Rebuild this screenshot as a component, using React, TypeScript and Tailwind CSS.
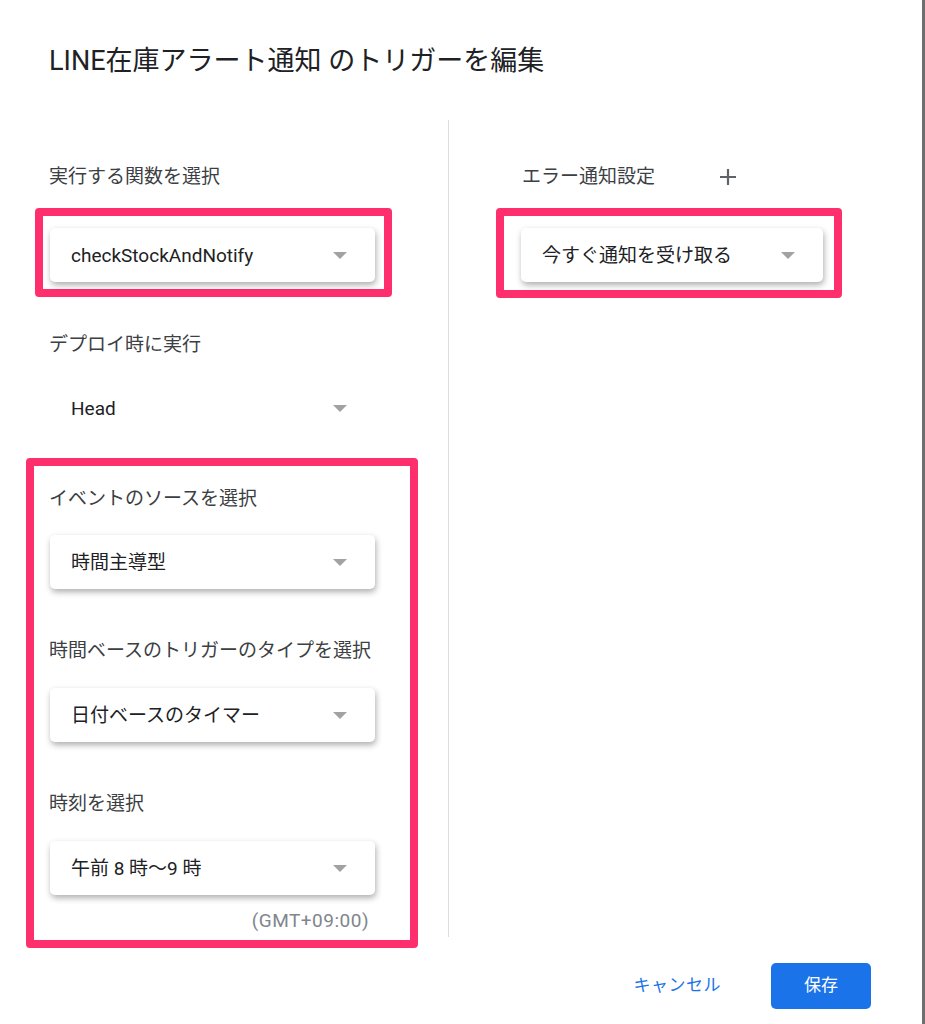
import React from "react"

const font = { fontFamily: '"Roboto", "Noto Sans CJK JP", sans-serif' }

const Arrow = () => (
    <svg width="14" height="7" viewBox="0 0 14 7" className="shrink-0">
        <path d="M0 0 L14 0 L7 7 Z" fill="#a2a2a2" />
    </svg>
)

const Select = ({ value, flat = false, width = "w-[325px]" }: { value: string; flat?: boolean; width?: string }) => (
    <div
        className={`${width} h-[54px] shrink-0 flex items-center justify-between pl-[21px] pr-[28px] rounded-[5px] bg-white ${
            flat ? "" : "shadow-[1px_3px_6px_rgba(0,0,0,0.32)]"
        }`}
    >
        <span className="text-[19px] leading-[24px] pt-[1px] text-[#202124]">{value}</span>
        <Arrow />
    </div>
)

const Label = ({ children }: { children: React.ReactNode }) => (
    <div className="text-[19px] leading-[24px] text-[#3c4043]">{children}</div>
)

const App = () => {
    return (
        <div style={font} className="w-[925px] h-[1024px] bg-white border-r-[3px] border-[#6f6f6f] flex flex-col">
            <h1 className="pl-[49px] pt-[43px] text-[27px] leading-[36px] text-[#202124]">
                LINE在庫アラート通知 のトリガーを編集
            </h1>

            <div className="flex mt-[41px]">
                {/* left column */}
                <div className="w-[449px] h-[817px] border-r border-[#dadce0] flex flex-col">
                    <div className="pl-[49px] mt-[45px]">
                        <Label>実行する関数を選択</Label>
                    </div>
                    <div className="ml-[35px] mt-[19px] w-[357px] h-[89px] shrink-0 border-[8px] border-[#ff2e6d] rounded-[4px] pl-[7px] pt-[12px]">
                        <Select value="checkStockAndNotify" />
                    </div>

                    <div className="pl-[49px] mt-[36px]">
                        <Label>デプロイ時に実行</Label>
                    </div>
                    <div className="pl-[50px] mt-[24px]">
                        <Select value="Head" flat />
                    </div>

                    <div className="ml-[26px] mt-[23px] w-[392px] h-[490px] shrink-0 border-[8px] border-[#ff2e6d] rounded-[4px] pl-[15px] pt-[21px] flex flex-col">
                        <Label>イベントのソースを選択</Label>
                        <div className="mt-[24px] ml-[1px]">
                            <Select value="時間主導型" />
                        </div>
                        <div className="mt-[50px]">
                            <Label>時間ベースのトリガーのタイプを選択</Label>
                        </div>
                        <div className="mt-[25px] ml-[1px]">
                            <Select value="日付ベースのタイマー" />
                        </div>
                        <div className="mt-[50px]">
                            <Label>時刻を選択</Label>
                        </div>
                        <div className="mt-[25px] ml-[1px]">
                            <Select value="午前 8 時〜9 時" />
                        </div>
                        <div className="w-[320px] text-right mt-[14px] text-[19px] leading-[24px] tracking-[0.5px] text-[#80868b]">
                            (GMT+09:00)
                        </div>
                    </div>
                </div>

                {/* right column */}
                <div className="flex-1 flex flex-col">
                    <div className="pl-[73px] mt-[45px] flex items-center">
                        <Label>エラー通知設定</Label>
                        <svg width="18" height="18" viewBox="0 0 18 18" className="ml-[64px]">
                            <path d="M9 1 V17 M1 9 H17" stroke="#5f6368" strokeWidth="2.2" />
                        </svg>
                    </div>
                    <div className="ml-[47px] mt-[19px] w-[346px] h-[90px] border-[8px] border-[#ff2e6d] rounded-[4px] pl-[17px] pt-[12px]">
                        <Select value="今すぐ通知を受け取る" width="w-[302px]" />
                    </div>
                </div>
            </div>

            <div className="flex items-center justify-end mt-[26px] pr-[51px]">
                <button className="text-[17px] text-[#1a73e8] mr-[50px] tracking-[0.5px]">キャンセル</button>
                <button className="w-[100px] h-[46px] rounded-[5px] bg-[#1a73e8] text-white text-[17px]">保存</button>
            </div>
        </div>
    )
}

export default App
